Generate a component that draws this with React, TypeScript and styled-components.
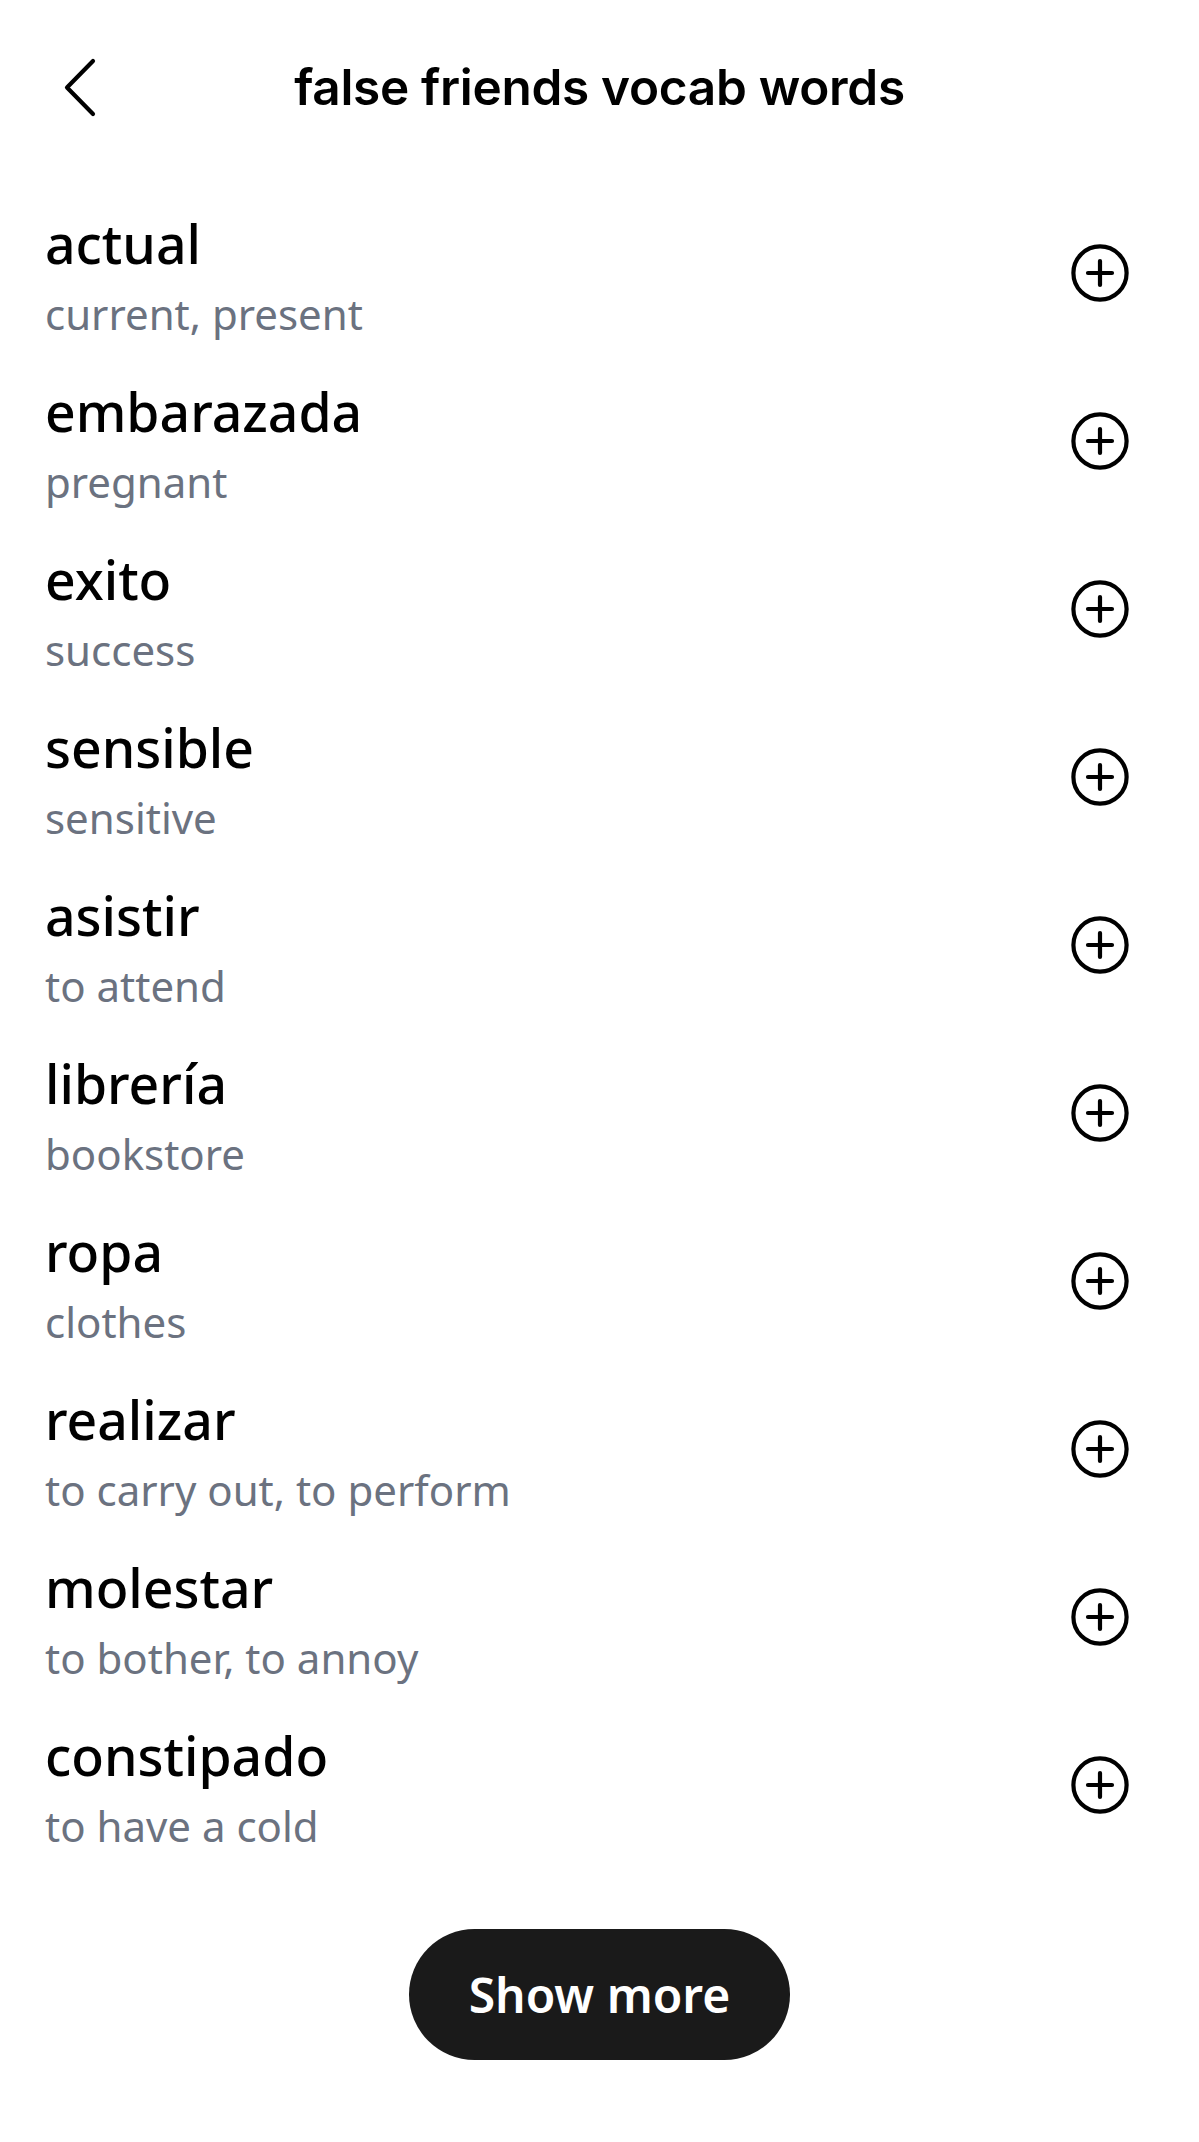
import React from 'react';
import styled, { createGlobalStyle } from 'styled-components';

const words = [
  { id: 1, word: 'actual', meaning: 'current, present' },
  { id: 2, word: 'embarazada', meaning: 'pregnant' },
  { id: 3, word: 'exito', meaning: 'success' },
  { id: 4, word: 'sensible', meaning: 'sensitive' },
  { id: 5, word: 'asistir', meaning: 'to attend' },
  { id: 6, word: 'librería', meaning: 'bookstore' },
  { id: 7, word: 'ropa', meaning: 'clothes' },
  { id: 8, word: 'realizar', meaning: 'to carry out, to perform' },
  { id: 9, word: 'molestar', meaning: 'to bother, to annoy' },
  { id: 10, word: 'constipado', meaning: 'to have a cold' },
];

const GlobalStyle = createGlobalStyle`
  html, body {
    margin: 0;
    padding: 0;
    background: #ffffff;
  }
  body {
    font-family: "Noto Sans", "Open Sans", sans-serif;
    color: #000000;
  }
`;

const BackIcon = () => (
  <svg width="40" height="64" viewBox="0 0 40 64" fill="none">
    <path d="M33 6 L7 32.5 L33 59" stroke="#000" strokeWidth="4.2" strokeLinecap="round" strokeLinejoin="round" />
  </svg>
);

const AddIcon = () => (
  <svg width="62" height="62" viewBox="0 0 62 62" fill="none">
    <circle cx="31" cy="31" r="26.6" stroke="#000" strokeWidth="4.2" />
    <path d="M31 19 V43 M19 31 H43" stroke="#000" strokeWidth="4.2" strokeLinecap="round" />
  </svg>
);

const App: React.FC = () => {
  return (
    <>
      <GlobalStyle />
      <Page>
        <Header>
          <BackButton aria-label="Back">
            <BackIcon />
          </BackButton>
          <Title>false friends vocab words</Title>
          <span />
        </Header>
        <WordList>
          {words.map(({ id, word, meaning }) => (
            <WordRow key={id}>
              <WordText>
                <Word>{word}</Word>
                <Meaning>{meaning}</Meaning>
              </WordText>
              <AddButton aria-label={`Add ${word}`}>
                <AddIcon />
              </AddButton>
            </WordRow>
          ))}
        </WordList>
        <Footer>
          <ShowMore>Show more</ShowMore>
        </Footer>
      </Page>
    </>
  );
};

const Page = styled.div`
  width: 1199px;
  min-height: 2142px;
  background: #ffffff;
`;

const Header = styled.header`
  display: grid;
  grid-template-columns: 120px 1fr 120px;
  align-items: center;
  height: 174px;
`;

const BackButton = styled.button`
  display: flex;
  align-items: center;
  justify-content: flex-start;
  padding: 0 0 0 60px;
  margin: 0;
  border: none;
  background: none;
  cursor: pointer;
`;

const Title = styled.h1`
  margin: 0;
  text-align: center;
  font-family: Inter, "Liberation Sans", sans-serif;
  font-size: 49.5px;
  font-weight: 600;
  line-height: 60px;
  letter-spacing: -0.3px;
  color: #000000;
`;

const WordList = styled.ul`
  list-style: none;
  margin: 0;
  padding: 17px 0 0;
`;

const WordRow = styled.li`
  display: flex;
  align-items: center;
  justify-content: space-between;
  height: 168px;
  padding: 0 68px 0 45px;
`;

const WordText = styled.div`
  display: flex;
  flex-direction: column;
  gap: 13px;
`;

const Word = styled.span`
  font-size: 53.5px;
  line-height: 64px;
  font-weight: 500;
  color: #000000;
`;

const Meaning = styled.span`
  font-size: 42px;
  line-height: 50px;
  font-weight: 400;
  color: #6b7280;
`;

const AddButton = styled.button`
  display: flex;
  padding: 0;
  margin: 0 0 5px;
  border: none;
  background: none;
  cursor: pointer;
`;

const Footer = styled.div`
  display: flex;
  justify-content: center;
  padding: 58px 0 0;
`;

const ShowMore = styled.button`
  width: 381px;
  height: 131px;
  border: none;
  border-radius: 66px;
  background: #1a1a1a;
  color: #ffffff;
  font-family: "Noto Sans", sans-serif;
  font-size: 48px;
  font-weight: 600;
  cursor: pointer;
`;

export default App;
